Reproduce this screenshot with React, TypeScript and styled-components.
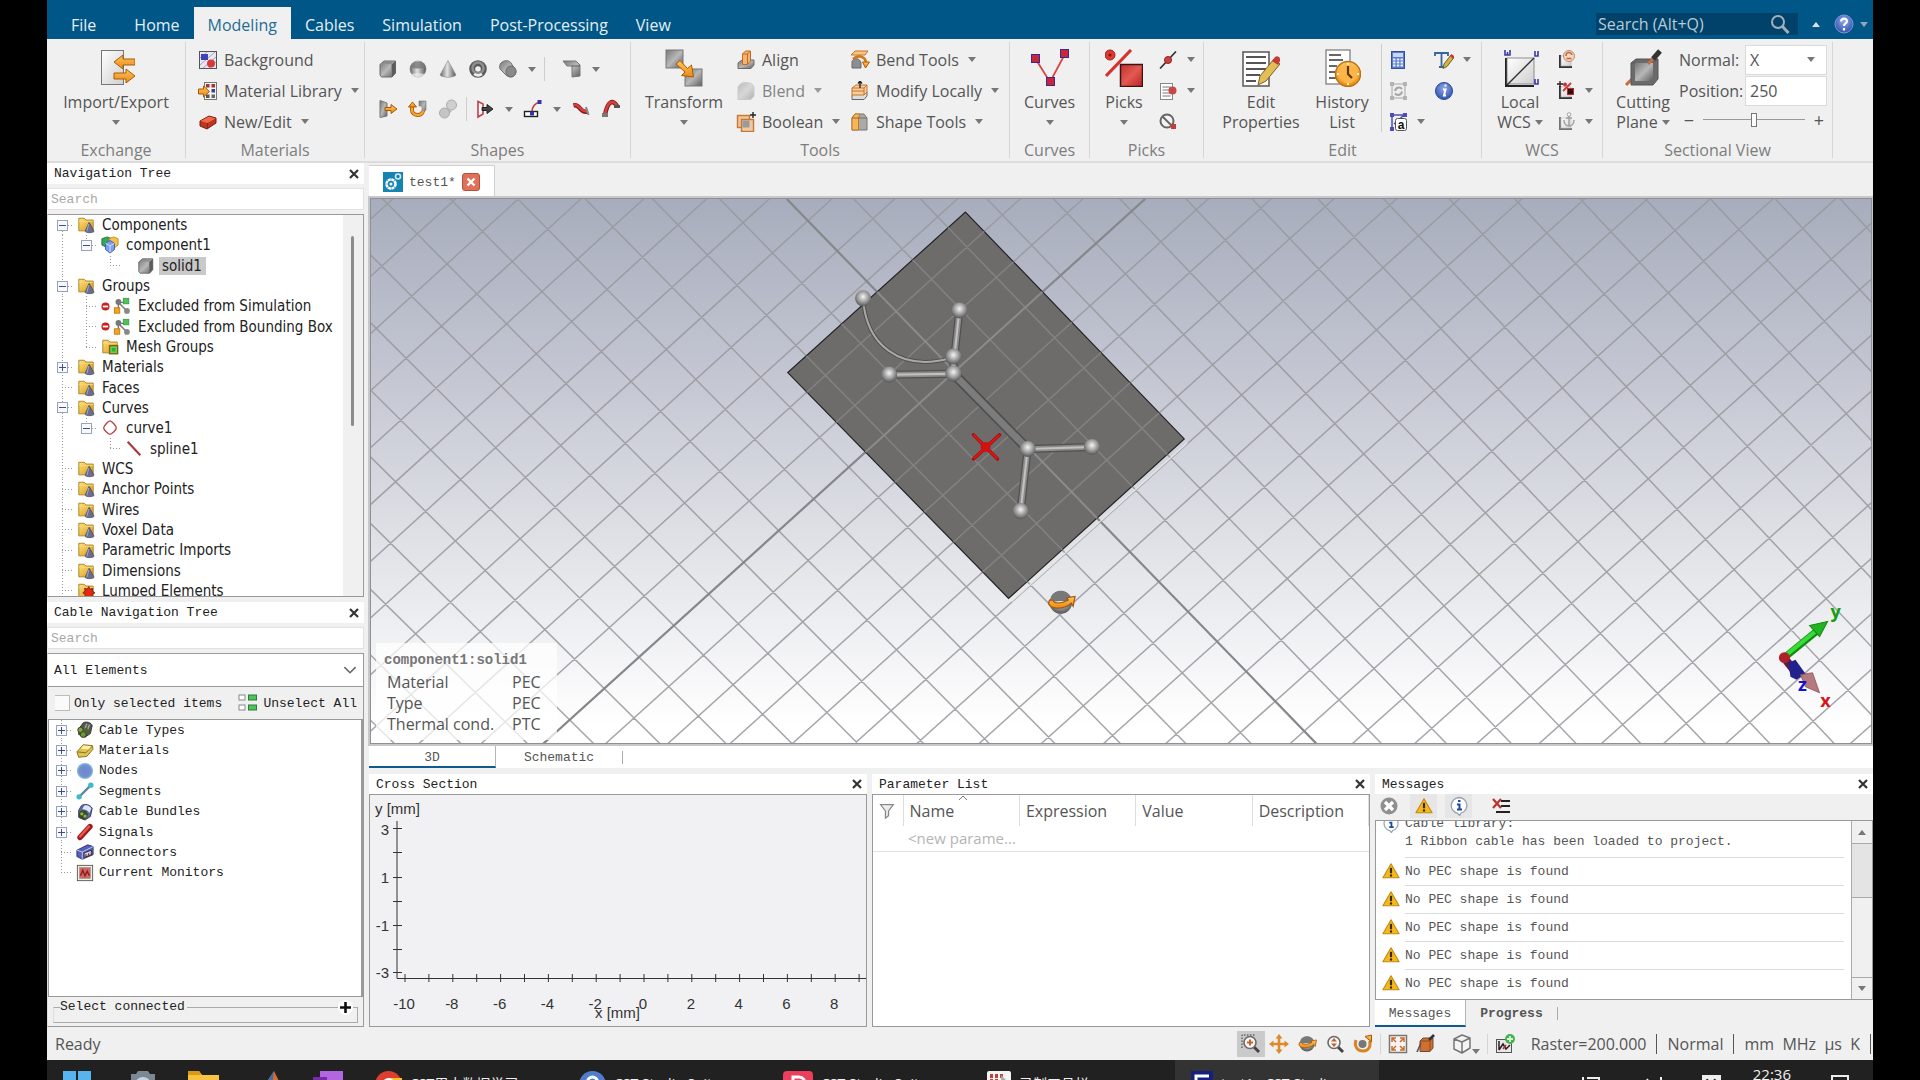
import React from 'react';
import styled, { createGlobalStyle, css } from 'styled-components';

const UI = `"Open Sans", "Noto Sans", "Noto Sans CJK SC", sans-serif`;
const MONO = `"Liberation Mono", "Noto Sans CJK SC", monospace`;
const TREE = `"DejaVu Sans Condensed", "Noto Sans", sans-serif`;

const GlobalStyle = createGlobalStyle`
  * { box-sizing: border-box; }
  body { margin: 0; background: #000; overflow: hidden; }
  button, input, select { font: inherit; color: inherit; margin: 0; }
  button { background: none; border: 0; padding: 0; cursor: pointer; }
  svg { display: block; flex: none; }
`;

/* ---------- icons ---------- */

const HiddenSvg = styled.svg`position: absolute;`;
const Gradients = () => (
  <HiddenSvg width="0" height="0" aria-hidden="true">
    <defs>
      <linearGradient id="steel" x1="0" y1="0" x2="1" y2="1">
        <stop offset="0" stopColor="#777" /><stop offset="0.5" stopColor="#b8b8b8" /><stop offset="1" stopColor="#5e5e5e" />
      </linearGradient>
      <linearGradient id="steelH" x1="0" y1="0" x2="1" y2="0">
        <stop offset="0" stopColor="#666" /><stop offset="0.45" stopColor="#e2e2e2" /><stop offset="1" stopColor="#555" />
      </linearGradient>
      <linearGradient id="pale" x1="0" y1="0" x2="1" y2="1">
        <stop offset="0" stopColor="#fff" /><stop offset="1" stopColor="#cfcfcf" />
      </linearGradient>
      <linearGradient id="amber" x1="0" y1="0" x2="0" y2="1">
        <stop offset="0" stopColor="#ffc35c" /><stop offset="1" stopColor="#ec8a12" />
      </linearGradient>
      <linearGradient id="gold" x1="0" y1="0" x2="1" y2="1">
        <stop offset="0" stopColor="#ffe07a" /><stop offset="1" stopColor="#d69a1e" />
      </linearGradient>
      <linearGradient id="ruby" x1="0" y1="0" x2="1" y2="1">
        <stop offset="0" stopColor="#c52f2f" /><stop offset="0.5" stopColor="#e25a50" /><stop offset="1" stopColor="#b82424" />
      </linearGradient>
      <radialGradient id="ball" cx="0.5" cy="0.4" r="0.6">
        <stop offset="0" stopColor="#f4f4f4" /><stop offset="0.5" stopColor="#a5a5a5" /><stop offset="1" stopColor="#555" />
      </radialGradient>
      <radialGradient id="blueBall" cx="0.5" cy="0.35" r="0.65">
        <stop offset="0" stopColor="#8fa9ea" /><stop offset="1" stopColor="#3152ac" />
      </radialGradient>
      <radialGradient id="softBall" cx="0.5" cy="0.5" r="0.5">
        <stop offset="0" stopColor="#7484d0" /><stop offset="0.7" stopColor="#6f8fd0" /><stop offset="1" stopColor="#8cc0dc" />
      </radialGradient>
    </defs>
  </HiddenSvg>
);

const orangeArrow = (d: string) => <path d={d} fill="url(#amber)" stroke="#a85a08" strokeWidth="1" strokeLinejoin="round" />;

const folder = (
  <>
    <path d="M2 2.500h6l2 2h8v12H2z" fill="url(#gold)" stroke="#a8801c" />
    <path d="M2 6h16" stroke="#f5d77c" />
  </>
);

const orbit = (
  <>
    <circle cx="10" cy="10" r="7.500" fill="url(#ball)" />
    <path d="M3.500 6a7.500 7.500 0 0 1 13 0l-1 3H5z" fill="#787878" />
    <path d="M2.500 8.500C-.5 14 10 16 17 10.500l1.200 2L19.500 6l-5.500.8 1 1.500C10 11 5 11 5 8.500z" fill="url(#amber)" stroke="#a05a10" strokeWidth="0.8" />
  </>
);

const axes = (
  <>
    <path d="M4 5v12h12" fill="none" stroke="#333" strokeWidth="2" />
    <rect x="5" y="6" width="10" height="10" fill="url(#pale)" stroke="#aaa" strokeWidth="0.6" />
  </>
);

const lens = (
  <>
    <path d="m12.500 12.500 5.500 5.500" stroke="#444" strokeWidth="3" />
    <circle cx="9" cy="8.500" r="6" fill="#f6f6f6" stroke="#6a6a6a" strokeWidth="1.600" />
  </>
);

const glyphs: Record<string, React.ReactNode> = {
  background: (
    <>
      <rect x="1.500" y="1.500" width="17" height="17" fill="#e8e8f2" stroke="#555" />
      <path d="m2 8 7-6M2 15 17 2M5 18 18 7M11 18l7-6" stroke="#a3a3bd" />
      <rect x="3" y="4" width="7" height="6" fill="#4040bb" />
      <circle cx="13" cy="13.500" r="4" fill="#d83a3a" />
    </>
  ),
  library: (
    <>
      <rect x="6.500" y="1.500" width="12" height="17" fill="#f5f5f5" stroke="#777" />
      <rect x="8" y="3" width="3.500" height="3.500" fill="#a33" /><rect x="13.500" y="3" width="3.500" height="3.500" fill="#a33" />
      <rect x="13.500" y="8" width="3.500" height="3.500" fill="#3a3aa0" /><rect x="8" y="13.500" width="3.500" height="3.500" fill="#555" /><rect x="13.500" y="13.500" width="3.500" height="3.500" fill="#666" />
      {orangeArrow('M0.500 8h5V5l6 5.500-6 5.500v-3h-5z')}
    </>
  ),
  brick: (
    <>
      <path d="m2 9 9-5 7 2v5l-9 6-7-3z" fill="#c03520" stroke="#7c1c10" />
      <path d="m2.500 9 8.500-4.500 6.500 2L9.500 11z" fill="#ef6a4c" />
      <path d="M9.500 11v5.500" stroke="#8c2414" />
    </>
  ),
  cube: (
    <>
      <path d="M2 5.500 6 2h11.500v12L14 18H3.500L2 16z" fill="url(#steel)" stroke="#6a6a6a" />
      <path d="M13.500 5.500 17.500 2v12L14 18z" fill="#5c5c5c" />
      <path d="M3 5 6.500 2.500H16L13 5z" fill="#8d8d8d" />
    </>
  ),
  sphere: (
    <>
      <circle cx="10" cy="10" r="8" fill="url(#steelH)" stroke="#777" strokeWidth="0.6" />
      <path d="M2.500 8a8 8 0 0 1 15 0c-4 2-11 2-15 0z" fill="#777" opacity="0.8" />
      <path d="M3.500 15a8 8 0 0 0 13 0c-4-1-9-1-13 0z" fill="#ececec" opacity="0.7" />
    </>
  ),
  cone: (
    <path d="M10 1.500 18 16c-2 3-14 3-16 0z" fill="url(#steelH)" stroke="#888" strokeWidth="0.6" />
  ),
  torus: (
    <>
      <circle cx="10" cy="10" r="5.800" fill="none" stroke="#5a5a5a" strokeWidth="6" />
      <circle cx="10" cy="9" r="5.500" fill="none" stroke="#8f8f8f" strokeWidth="2.500" />
      <path d="M6 15a7 7 0 0 0 8 0" stroke="#eee" strokeWidth="2.500" fill="none" />
    </>
  ),
  cylinder: (
    <>
      <path d="M3 4c4-4 9-2 10 0l5 8c0 5-6 8-10 4L2 10c-1-2 0-5 1-6z" fill="url(#steel)" stroke="#707070" />
      <ellipse cx="13" cy="12.500" rx="5" ry="5.500" fill="#8a8a8a" stroke="#6a6a6a" />
    </>
  ),
  sheet: (
    <>
      <path d="M1 2h13l4 4v11l-8 1V7H5z" fill="url(#steel)" stroke="#777" />
      <path d="M10 7h8" stroke="#606060" />
    </>
  ),
  extrude: (
    <>
      <path d="M2 1.500 9 4v13l-7 1.500z" fill="url(#steel)" stroke="#777" />
      {orangeArrow('M7 8.500h6v-3l6 4.500-6 4.500v-3H7z')}
    </>
  ),
  revolve: (
    <>
      <path d="M11 2h7v9l-4 4V7h-3z" fill="url(#steel)" stroke="#777" strokeWidth="0.6" />
      <path d="M4 8v3c0 6 10 7 11 1" fill="none" stroke="#a85a08" strokeWidth="4" />
      <path d="M4 8v3c0 6 10 7 11 1" fill="none" stroke="#f5a232" strokeWidth="2.500" />
      {orangeArrow('M0.500 8 4.500 3l4 5z')}
    </>
  ),
  loft: (
    <>
      <circle cx="13.500" cy="6" r="5" fill="#cfcfcf" stroke="#aaa" />
      <path d="m8 10 4 4" stroke="#bbb" strokeWidth="5" />
      <circle cx="6.500" cy="14" r="5" fill="#c5c5c5" stroke="#aaa" />
    </>
  ),
  faceArrow: (
    <>
      <path d="M3 2.500 8 5v10l-5 3z" fill="#fff" stroke="#c43c48" strokeWidth="1.600" />
      <path d="M7 8.500h5v-3l6 4.500-6 4.500v-3H7z" fill="#444" stroke="#222" />
    </>
  ),
  curveNode: (
    <>
      <path d="M9 13c0-6 4-9 8-10" stroke="#c83a3a" strokeWidth="1.600" fill="none" />
      <rect x="1.500" y="12.500" width="13" height="5" fill="#fff" stroke="#222" strokeWidth="1.400" />
      <rect x="14.500" y="1" width="4" height="4" fill="#3434a8" /><rect x="7" y="12.500" width="4" height="4" fill="#3434a8" />
    </>
  ),
  wave: (
    <>
      <path d="M2.500 6.500c7-2 6 8 14 6" stroke="#851d1d" strokeWidth="4.500" fill="none" />
      <path d="M2.500 6c7-2 6 8 14 6" stroke="#d84040" strokeWidth="2.500" fill="none" />
      <path d="m15 8 2.500 8" stroke="#888" strokeWidth="2" />
    </>
  ),
  hook: (
    <>
      <path d="M4 17C6 2 12 0 16 7" stroke="#851d1d" strokeWidth="4.500" fill="none" />
      <path d="M4 16C6 2 12 0 16 7" stroke="#d84040" strokeWidth="2.500" fill="none" />
      <rect x="1" y="14" width="6" height="4" fill="#777" /><rect x="13" y="6" width="6" height="3" fill="#555" />
    </>
  ),
  align: (
    <>
      <path d="m2 13 4-3h12v5l-3 3.500H2z" fill="url(#steel)" stroke="#6a6a6a" />
      <path d="m6.500 4 3-3h5v10l-3 3.500h-5z" fill="#f2b475" stroke="#c56a20" />
      <path d="M6.500 4h5v10M11.500 4l3-3" fill="none" stroke="#c56a20" />
    </>
  ),
  blend: <path d="M2 6c3-5 7-5 11-4 5 1 5 4 5 6v7l-3 3.500H2z" fill="url(#steel)" stroke="#999" opacity="0.6" />,
  boolean: (
    <>
      <rect x="1.500" y="3.500" width="12" height="12" fill="#f0c49a" stroke="#c87830" strokeWidth="1.400" />
      <rect x="5.500" y="7.500" width="12" height="12" fill="#eec9a6" stroke="#c87830" strokeWidth="1.400" />
      <rect x="6.500" y="8.500" width="7" height="7" fill="#9a9a9a" />
      <path d="M17 0v6M14 3h6" stroke="#222" strokeWidth="1.400" />
    </>
  ),
  bend: (
    <>
      <path d="m1 5 4-4h13l-3 4z" fill="#f7c587" stroke="#c5772a" />
      <path d="M2 18v-6c0-4 8-5 9 1v5z" fill="#8b8f94" stroke="#666" />
      <path d="M3 9c6-5 12-2 13 3" fill="none" stroke="#d07a18" strokeWidth="2.600" />
      {orangeArrow('M12.500 12h7l-4 6z')}
    </>
  ),
  modify: (
    <>
      <path d="m2 14 3-3h12v4l-3 3.500H2z" fill="#ddd" stroke="#666" />
      <path d="m2 7 4-3h11v7l-3 3H2z" fill="#f7cf9c" stroke="#c5742a" />
      <path d="M2 7h12l3-3M14 7v7M2 10h12" fill="none" stroke="#c5742a" />
      <path d="M10 0v7M8 2.500 10 0l2 2.500" stroke="#222" fill="none" strokeWidth="1.300" />
    </>
  ),
  shape: (
    <>
      <path d="m2 6 3-4h9l3 4v12H2z" fill="#aaa" stroke="#777" />
      <path d="m2 6 3-4h5L8.500 6v12H2z" fill="#f8b659" stroke="#c07820" />
      <path d="M2 6h15" stroke="#8a6a40" />
    </>
  ),
  pickPoint: (
    <>
      <path d="M2 18.500 18 1.500" stroke="#333" strokeWidth="1.800" />
      <circle cx="10" cy="10" r="3.500" fill="#d04040" stroke="#8c2020" />
    </>
  ),
  pickList: (
    <>
      <rect x="2.500" y="2.500" width="12" height="16" fill="#fff" stroke="#888" />
      <path d="M4.500 6h8M4.500 9h8M4.500 12h8M4.500 15h8" stroke="#777" />
      <circle cx="14.500" cy="9.500" r="4" fill="#c84848" />
    </>
  ),
  pickClear: (
    <>
      <circle cx="9" cy="9" r="6.500" fill="#f4f4f4" stroke="#666" strokeWidth="2" />
      <path d="m4.500 4.500 9 9" stroke="#666" strokeWidth="2" />
      <path d="M13 12h5v5h-5z" fill="#c93c3c" />
    </>
  ),
  calculator: (
    <>
      <rect x="3.500" y="1.500" width="13" height="17" fill="#5d7bcb" stroke="#33509c" />
      <rect x="5" y="3" width="10" height="4" fill="#c9d6f5" />
      <path d="M5 9.500h2.500M8.800 9.500h2.500M12.500 9.500H15M5 12.500h2.500M8.800 12.500h2.500M12.500 12.500H15M5 15.500h2.500M8.800 15.500h2.500M12.500 15.500H15" stroke="#e8eefc" strokeWidth="2" />
    </>
  ),
  refreshBox: (
    <g opacity="0.7">
      <path d="M4 3h13v14H4z" fill="#eee" stroke="#888" />
      <path d="M2 1h4v4H2zM15 1h4v4h-4zM2 15h4v4H2zM15 15h4v4h-4z" fill="#999" />
      <path d="M7 10a4 4 0 0 1 7-2M14 10.500a4 4 0 0 1-7 2" stroke="#888" strokeWidth="2" fill="none" />
    </g>
  ),
  labelBox: (
    <>
      <path d="M4 3h12M4 3v14M6 12 16 3" stroke="#4c4cc0" strokeWidth="1.500" fill="none" />
      <path d="M2 1h4v4H2zM15 1h4v4h-4zM2 15h4v4H2z" fill="#4c4cc0" />
      <rect x="7.500" y="6.500" width="11" height="12" rx="2" fill="#fff" stroke="#555" />
      <text x="13" y="16.500" fontSize="12" fontWeight="bold" fontFamily="Liberation Sans, sans-serif" textAnchor="middle" fill="#111">a</text>
    </>
  ),
  textEdit: (
    <>
      <path d="M1 3h13M7.500 3v14M5 17h5M1 2v4M14 2v4" stroke="#35659f" strokeWidth="1.800" />
      <path d="m10 14 7-9 3 2.500-7 9-4 2z" fill="#dcae46" stroke="#5c6a28" />
      <path d="m16 6 1.500-2 3 2.500L19 9z" fill="#c83a30" />
    </>
  ),
  info: (
    <>
      <circle cx="10" cy="10" r="8.500" fill="url(#blueBall)" stroke="#27489c" />
      <path d="M10.500 4.500h2M9 8.500h2.500l-1.500 6h2" stroke="#fff" strokeWidth="2" fill="none" />
    </>
  ),
  wcsRotate: (
    <>
      {axes}
      <circle cx="13" cy="6" r="5.500" fill="#f4d7c4" stroke="#c08a6a" />
      <path d="M10 6a3 3 0 0 1 6-1M10.500 8.500h5" stroke="#c0683a" strokeWidth="1.500" fill="none" />
    </>
  ),
  wcsPick: (
    <>
      {axes}
      <path d="M1 3h6M4 0v6" stroke="#222" strokeWidth="1.300" />
      <path d="m7 10 8-8" stroke="#d03a3a" strokeWidth="2" /><circle cx="9" cy="3.500" r="2" fill="#c33" />
      <rect x="11.500" y="7.500" width="6" height="6" fill="#3a0c0c" stroke="#a33" />
    </>
  ),
  wcsAnchor: (
    <g opacity="0.65">
      {axes}
      <circle cx="13" cy="2.500" r="1.800" fill="#fff" stroke="#777" />
      <path d="M13 4v10M8 8c0 8 10 8 10 0M10 6h6" stroke="#777" strokeWidth="1.500" fill="none" />
    </g>
  ),
  folder: (
    <>
      {folder}
      <path d="m13.500 7 5.500 10c-1 2-9 2-10 0z" fill="#6b6f8e" stroke="#3f4463" strokeWidth="0.8" />
      <path d="m13 9-2 8" stroke="#aab0cc" />
    </>
  ),
  folderMesh: (
    <>
      {folder}
      <rect x="9.500" y="8.500" width="9" height="9" fill="#58d858" stroke="#8c5a12" strokeWidth="1.500" />
      <rect x="12" y="11" width="4" height="4" fill="#2fae2f" />
    </>
  ),
  folderLumped: (
    <>
      {folder}
      <path d="m13 5 1.500 3 3-1-.5 3 3 2-3 1.500v3H9V13.500L6.500 12 9 10l-.5-3 3 1z" fill="#e02a12" stroke="#8c1608" />
    </>
  ),
  component: (
    <>
      <path d="m1 3 6-2 5 2v7l-5 3-6-3z" fill="#35a852" stroke="#1d7034" />
      <path d="m9 3 5-2 5 2v7l-5 4-5-3z" fill="#f6c04c" stroke="#c08a1c" />
      <path d="m5 8 5-3 5 3v7l-5 4-5-4z" fill="#7e9df0" stroke="#3a5ab8" />
      <path d="m5 8 5 3 5-3M10 11v7" stroke="#dde6ff" fill="none" />
    </>
  ),
  excluded: (
    <>
      <path d="M6 6h9M6 6l9 9M6 6v9" stroke="#777" strokeWidth="1.600" />
      <circle cx="6" cy="5.500" r="3.200" fill="#777" />
      <rect x="11.500" y="1.500" width="6" height="6" fill="#4fc25a" stroke="#3aa048" />
      <rect x="1.500" y="12" width="6" height="6" fill="#f2a324" stroke="#c47c10" />
      <circle cx="15.500" cy="15.500" r="3.200" fill="#888" />
    </>
  ),
  forbid: (
    <>
      <circle cx="10" cy="10" r="9" fill="#c8201c" />
      <path d="M4 10h12" stroke="#fff" strokeWidth="4" />
    </>
  ),
  curve: <path d="M10 2c2 0 7 6 7 8s-5 7-7 7-7-5-7-7 5-8 7-8z" fill="#fff" stroke="#b84444" strokeWidth="1.500" />,
  spline: <path d="m3 2 14 15" stroke="#a83a3e" strokeWidth="2.400" />,
  cable: (
    <>
      <path d="M8 2c4-2 9 0 10 3l-2 9-6 4-7-3V9z" fill="#56584e" stroke="#333" />
      <path d="m12 3-3 8M15 4l-3 8" stroke="#a9aba0" strokeWidth="1.500" />
      <circle cx="5" cy="10" r="3" fill="#86a83a" stroke="#333" /><circle cx="8" cy="15" r="3.300" fill="#6f9830" stroke="#333" /><circle cx="11" cy="10.500" r="2.600" fill="#466a28" />
    </>
  ),
  goldBar: (
    <>
      <path d="m1 11 7-8 10 1 1 4-7 8-9 1z" fill="#e0c350" stroke="#80691c" />
      <path d="m1.500 11 9.500 1 7.500-8" fill="none" stroke="#80691c" /><path d="m8 4 9 .8-3 3.500L5.500 7.500z" fill="#fff1a8" />
    </>
  ),
  node: <circle cx="10" cy="10" r="9" fill="url(#softBall)" />,
  segment: (
    <>
      <path d="M4 16 16 4" stroke="#5a8a9c" strokeWidth="2.500" />
      <circle cx="16.500" cy="3.500" r="3" fill="#3fb8cc" /><circle cx="3.500" cy="16.500" r="3" fill="#3fb8cc" />
    </>
  ),
  bundle: (
    <>
      <path d="M6 3c4-3 10-1 12 3l-2 9-6 4-7-3V8z" fill="#5a6aa8" stroke="#2c355f" />
      <path d="M9 3c3-1 6 0 8 3l-2 5c-2-3-5-4-8-4z" fill="#dfe6fa" />
      <circle cx="8" cy="13" r="5" fill="#3c4a28" /><circle cx="6.500" cy="12" r="1.800" fill="#94b83c" /><circle cx="10" cy="14.500" r="1.800" fill="#94b83c" />
    </>
  ),
  signal: (
    <>
      <path d="M4.500 16 15.500 4" stroke="#a01818" strokeWidth="6" strokeLinecap="round" />
      <path d="m4.500 15 10-11" stroke="#ee5a50" strokeWidth="2.500" strokeLinecap="round" />
    </>
  ),
  connector: (
    <>
      <path d="m1 8 12-6 6 2v9l-12 5-6-3z" fill="#5560b8" stroke="#2a3270" />
      <path d="m1 8 6 2 12-6M7 10v8" fill="none" stroke="#c9d0f5" />
      <path d="m9 11 8-3v5l-8 3z" fill="#cfd4ea" stroke="#222" /><path d="M11 12.500v2M14 11.500v2" stroke="#a22" strokeWidth="1.500" />
    </>
  ),
  monitor: (
    <>
      <rect x="1.500" y="1.500" width="17" height="17" fill="#ececec" stroke="#555" />
      <rect x="4" y="4" width="12" height="12" fill="#c96a6a" stroke="#884" strokeWidth="0.5" />
      <path d="m5 13 2.500-6L10 13l2.500-5 2.500 5" stroke="#a01414" strokeWidth="1.600" fill="none" />
    </>
  ),
  unselect: (
    <>
      <rect x="1" y="2" width="6" height="5" fill="#fff" stroke="#888" /><rect x="1" y="12" width="6" height="5" fill="#fff" stroke="#888" />
      <rect x="10.500" y="2" width="8" height="5" fill="#4fc25a" stroke="#2c7a38" /><rect x="10.500" y="12" width="8" height="5" fill="#4fc25a" stroke="#2c7a38" />
    </>
  ),
  warning: (
    <>
      <path d="M10 2 19 17.500H1z" fill="#f5b81e" stroke="#c08a10" strokeWidth="1.200" strokeLinejoin="round" />
      <path d="M10 6.500v6" stroke="#3a2c00" strokeWidth="2.400" /><circle cx="10" cy="15" r="1.300" fill="#3a2c00" />
    </>
  ),
  bubble: (
    <>
      <path d="M10 1.500a8 8 0 0 1 2 15.700l-1.500 2.300-2-2.200A8 8 0 0 1 10 1.500z" fill="#fff" stroke="#98a0b0" strokeWidth="1.300" />
      <path d="M9 5h2.500M8 8.500h2.500v5M8 13.500h5" stroke="#1c4aa0" strokeWidth="2" fill="none" />
    </>
  ),
  errorOff: (
    <>
      <circle cx="10" cy="10" r="8.500" fill="#8f8f8f" />
      <path d="m6 6 8 8M14 6l-8 8" stroke="#fff" strokeWidth="3.200" />
    </>
  ),
  clearList: (
    <>
      <path d="M9 5h9M9 10h9M4 16h14" stroke="#222" strokeWidth="2.200" />
      <path d="m1 3 8 9M9 3l-8 9" stroke="#b8342c" strokeWidth="2.200" />
    </>
  ),
  filter: <path d="M2 2h16l-6 8v6l-4 3v-9z" fill="url(#pale)" stroke="#888" strokeWidth="1.500" />,
  project: (
    <>
      <rect width="20" height="20" fill="#1584ae" />
      <circle cx="8" cy="12" r="4.500" fill="none" stroke="#fff" strokeWidth="2.500" strokeDasharray="3 0.500" />
      <circle cx="8" cy="12" r="1.500" fill="#fff" />
      <circle cx="15" cy="4.500" r="2.500" fill="none" stroke="#cdeaf5" strokeWidth="1.600" />
    </>
  ),
  help: (
    <>
      <circle cx="10" cy="10" r="9" fill="url(#blueBall)" stroke="#7a96d8" />
      <path d="M7 7.500c0-4 6.500-3.500 6 0-.3 2-3 2-3 4.500M10 14v2.500" stroke="#fff" strokeWidth="2.200" fill="none" />
    </>
  ),
  search: (
    <>
      <circle cx="8" cy="8" r="6" fill="none" stroke="#9fb0bb" strokeWidth="2" />
      <path d="m12.500 12.500 6 6.500" stroke="#9fb0bb" strokeWidth="3" />
    </>
  ),
  zoomBox: (
    <>
      <path d="M1 14V1h13" fill="none" stroke="#333" strokeDasharray="1.500 1.500" />
      {lens}
      <path d="M6 8.500h6M9 5.500v6" stroke="#c8622a" strokeWidth="2" />
    </>
  ),
  pan: (
    <>
      <path d="M10 3v14M3 10h14" stroke="#dc8a2c" strokeWidth="2.600" />
      <path d="m10 0 3.500 4.500h-7zM10 20l3.500-4.500h-7zM0 10l4.500-3.500v7zM20 10l-4.500-3.500v7z" fill="#dc8a2c" />
    </>
  ),
  orbit,
  zoom: (
    <>
      {lens}
      <path d="m9 4 3 3.500H6zM9 13l3-3.500H6z" fill="#c8622a" />
    </>
  ),
  rotate: (
    <>
      <circle cx="9.500" cy="10" r="4" fill="#777" />
      <path d="M3 6c-2 6 1 11 7 11s8-5 6.500-10" fill="none" stroke="#d98422" strokeWidth="3" />
      {orangeArrow('M12 2.500 18.500 1v7z')}
    </>
  ),
  fit: (
    <>
      <rect x="1.500" y="1.500" width="17" height="17" fill="#f4f4f4" stroke="#777" strokeWidth="1.500" />
      <path d="M4 8V4h4M12 4h4v4M16 12v4h-4M8 16H4v-4M4 4l4 4M16 4l-4 4M16 16l-4-4M4 16l4-4" stroke="#d06a2a" strokeWidth="1.500" fill="none" />
    </>
  ),
  cutBox: (
    <>
      <path d="m4 7 3-3h10v10l-3 3.500H4z" fill="#cf7030" stroke="#6a4a38" />
      <path d="M4 7h10V17" fill="none" stroke="#8a4a20" />
      <path d="m13 6 5-5" stroke="#333" strokeWidth="2.600" /><path d="m5 9-4 9" stroke="#555" strokeWidth="1.600" />
    </>
  ),
  wireCube: (
    <path d="m2 5 8-4 8 3v10l-8 5-8-4zM2 5l8 3 8-4M10 8v11" fill="#f5f5f5" stroke="#777" strokeWidth="1.500" strokeLinejoin="round" />
  ),
  addPlot: (
    <>
      <rect x="1.500" y="5.500" width="15" height="13" fill="#e8e8e8" stroke="#555" />
      <path d="M4 7v9M4 16l4-6 3 5 4-4" stroke="#222" strokeWidth="1.500" fill="none" /><path d="m8 15 3-4" stroke="#b33" strokeWidth="1.500" />
      <circle cx="15" cy="5" r="5" fill="#45b250" /><path d="M15 2v6M12 5h6" stroke="#d7f4da" strokeWidth="1.800" />
    </>
  ),
};

const bigGlyphs: Record<string, React.ReactNode> = {
  exchange: (
    <>
      <rect x="4.500" y="1.500" width="22" height="34" fill="url(#pale)" stroke="#777" />
      {orangeArrow('M38 10H26V6l-9 7 9 7v-4h12z')}
      {orangeArrow('M17 24h12v-4l9 7-9 7v-4H17z')}
    </>
  ),
  transform: (
    <>
      <rect x="1" y="1" width="17" height="18" fill="url(#steel)" stroke="#777" />
      <rect x="20" y="20" width="17" height="17" fill="url(#steel)" stroke="#777" />
      {orangeArrow('m11 15 4-3.500 7.500 8 4-3.500 2 12-12-1.500 3.500-3.500z')}
    </>
  ),
  curves: (
    <>
      <path d="m4 9 15 24L34 5" stroke="#dc4444" strokeWidth="1.800" fill="none" />
      <rect x="0.500" y="5.500" width="8" height="8" fill="#c8263c" stroke="#3a2a90" /><rect x="29.500" y="0.500" width="8" height="8" fill="#c8263c" stroke="#3a2a90" /><rect x="15.500" y="28.500" width="8" height="8" fill="#c8263c" stroke="#3a2a90" />
    </>
  ),
  picks: (
    <>
      <circle cx="5" cy="6" r="5" fill="#e03a30" stroke="#a02018" /><circle cx="5" cy="6" r="1.500" fill="#7c1610" />
      <path d="M1 27 26 1" stroke="#d23430" strokeWidth="3.200" />
      <rect x="15.500" y="15.500" width="22" height="22" fill="url(#ruby)" stroke="#3a1414" strokeWidth="1.500" />
    </>
  ),
  properties: (
    <>
      <rect x="1" y="3" width="26" height="34" fill="#fff" stroke="#555" strokeWidth="1.500" />
      <path d="M4 8h20M4 14h20M4 20h20M4 26h14M4 32h10" stroke="#555" strokeWidth="1.800" />
      <path d="m16 36 2-9 14-17 6 5-14 17z" fill="#e3bd58" stroke="#7a6124" /><path d="m30 12 3-4c3-2 6 1 5 4l-2 4z" fill="#c43c34" />
    </>
  ),
  history: (
    <>
      <rect x="3" y="1" width="24" height="34" fill="#fff" stroke="#777" strokeWidth="1.200" />
      <path d="M6 6h12M6 11h14M6 17h8M6 23h6M6 29h7" stroke="#666" strokeWidth="1.800" />
      <circle cx="25" cy="25" r="12.500" fill="url(#amber)" stroke="#b87414" strokeWidth="1.500" />
      <circle cx="25" cy="25" r="9.500" fill="#ffb446" />
      <path d="M25 17v8l4 4" stroke="#5a3a10" strokeWidth="2.200" fill="none" /><path d="M25 14v2M25 34v2M14 25h2M34 25h2" stroke="#fff0d0" strokeWidth="2" />
    </>
  ),
  wcs: (
    <>
      <path d="M5 9v28h28" fill="none" stroke="#222" strokeWidth="2" />
      <rect x="6" y="9" width="27" height="26" fill="url(#pale)" stroke="#777" strokeWidth="0.8" />
      <path d="M6 36 33 9" stroke="#333" strokeWidth="1.500" />
      <path d="M4 1v5h5V1M6.500 3v3M34 2v5h3V2M34 30v5h3v-5" stroke="#3a3aa0" strokeWidth="1.600" fill="none" />
    </>
  ),
  cutting: (
    <>
      <path d="M2 36 10 28" stroke="#cc6a3c" strokeWidth="3" />
      <path d="m7 14 5-4h22v20l-5 6H7z" fill="#6a6a6a" stroke="#555" />
      <rect x="11" y="14" width="18" height="18" fill="url(#steel)" />
      <path d="M29 14l5-4M7 14l4 0" fill="none" stroke="#5a5a5a" />
      <path d="m24 15 5-5" stroke="#cc6a3c" strokeWidth="3" />
      <path d="m29 10 7-8" stroke="#333" strokeWidth="5" />
    </>
  ),
};

const Icon = ({ name, size = 20 }: { name: string; size?: number }) => (
  <svg width={size} height={size} viewBox="0 0 20 20" aria-hidden="true">{glyphs[name]}</svg>
);
const BigIcon = ({ name }: { name: string }) => (
  <svg width="38" height="38" viewBox="0 0 38 38" aria-hidden="true">{bigGlyphs[name]}</svg>
);

const Caret = styled.span<{ $up?: boolean; $light?: boolean }>`
  flex: none;
  width: 0;
  height: 0;
  border: 4px solid transparent;
  ${p => (p.$up ? css`border-top-width: 0; border-bottom: 5px solid;` : css`border-bottom-width: 0; border-top: 5px solid;`)}
  color: ${p => (p.$light ? '#8fa8b8' : '#777')};
`;

/* ---------- shell ---------- */

const Shell = styled.div`
  display: flex;
  flex-direction: column;
  height: 100vh;
  overflow: hidden;
  margin: 0 47px;
  background: #f0f0f0;
  font-family: ${UI};
  font-size: 16px;
  color: #555;
`;

const TitleBar = styled.header`
  display: flex;
  justify-content: space-between;
  padding-top: 7px;
  background: #005686;
`;
const TabList = styled.nav`display: flex;`;
const RibbonTab = styled.button<{ $active?: boolean; $file?: boolean }>`
  height: 32px;
  padding: 4px ${p => (p.$file ? 24 : 14)}px 0;
  line-height: 28px;
  color: ${p => (p.$active ? '#1f6d95' : '#e4eef4')};
  background: ${p => (p.$active ? '#f0f0f0' : 'transparent')};
`;
const TitleTools = styled.div`
  display: flex;
  align-items: center;
  gap: 10px;
  padding: 2px 5px 0 0;
`;
const QuickSearch = styled.label`
  display: flex;
  align-items: center;
  width: 202px;
  height: 22px;
  padding: 0 8px 0 2px;
  background: #00426a;
  input {
    flex: 1;
    min-width: 0;
    padding: 0;
    border: 0;
    outline: 0;
    background: none;
    line-height: 22px;
    &::placeholder { color: #b9cbd6; opacity: 1; }
  }
`;
const HelpButton = styled.button`display: flex; align-items: center; gap: 6px;`;
const CollapseButton = styled.button`
  display: flex;
  padding: 4px;
  span { color: #d9e4ea; }
`;

/* ---------- ribbon ---------- */

const Ribbon = styled.section`
  display: flex;
  padding: 3px 0;
  border-bottom: 2px solid #dcdcdc;
`;
const GroupBox = styled.div<{ $w: number }>`
  flex: 0 0 ${p => p.$w}px;
  display: flex;
  flex-direction: column;
  padding-top: 2px;
  border-right: 1px solid #d6d6d6;
`;
const GroupBody = styled.div<{ $inset?: number; $center?: boolean }>`
  display: flex;
  height: 93px;
  padding-left: ${p => p.$inset ?? 0}px;
  justify-content: ${p => (p.$center ? 'center' : 'flex-start')};
`;
const GroupTitle = styled.div`
  margin-top: 5px;
  line-height: 16px;
  text-align: center;
  color: #7d7d7d;
`;
const Group = (p: { title: string; w: number; inset?: number; center?: boolean; children: React.ReactNode }) => (
  <GroupBox $w={p.w}>
    <GroupBody $inset={p.inset} $center={p.center}>{p.children}</GroupBody>
    <GroupTitle>{p.title}</GroupTitle>
  </GroupBox>
);

const BigButton = styled.button<{ $w?: number }>`
  flex: none;
  width: ${p => (p.$w ? `${p.$w}px` : 'auto')};
  display: flex;
  flex-direction: column;
  align-items: center;
  padding-top: 5px;
  line-height: 20px;
  svg { margin-bottom: 5px; }
`;
const BigSecond = styled.span`
  display: flex;
  align-items: center;
  justify-content: center;
  gap: 4px;
  height: 20px;
`;
const Big = (p: { icon: string; label: string; second?: string; arrow?: boolean; w?: number }) => (
  <BigButton $w={p.w}>
    <BigIcon name={p.icon} />
    <span>{p.label}</span>
    <BigSecond>{p.second}{p.arrow && <Caret />}</BigSecond>
  </BigButton>
);

const Column = styled.div<{ $w?: number; $ml?: number }>`
  flex: none;
  width: ${p => (p.$w ? `${p.$w}px` : 'auto')};
  margin-left: ${p => p.$ml ?? 0}px;
  display: grid;
  grid-template-rows: repeat(3, 31px);
  align-items: center;
  justify-items: start;
`;
const ToolButton = styled.button<{ $off?: boolean }>`
  display: flex;
  align-items: center;
  gap: 6px;
  white-space: nowrap;
  opacity: ${p => (p.$off ? 0.7 : 1)};
  ${Caret} { margin-left: 3px; }
`;
const Tool = (p: { icon: string; label?: string; name?: string; arrow?: boolean; off?: boolean }) => (
  <ToolButton $off={p.off} aria-label={p.name}>
    <Icon name={p.icon} />
    {p.label}
    {p.arrow && <Caret />}
  </ToolButton>
);

const ShapeRows = styled.div`
  display: grid;
  grid-template-rows: 40px 40px;
  padding-top: 5px;
`;
const ShapeRow = styled.div`display: flex; align-items: center;`;
const ShapeButton = styled.button<{ $arrow?: boolean }>`
  display: flex;
  align-items: center;
  justify-content: center;
  width: ${p => (p.$arrow ? 18 : 30)}px;
  height: 30px;
`;
const Rule = styled.i<{ $after?: number; $h?: number }>`
  flex: none;
  width: 1px;
  height: ${p => p.$h ?? 24}px;
  margin: 0 ${p => p.$after ?? 3}px 0 3px;
  background: #cdcdcd;
`;
const Shape = ({ name }: { name: string }) => <ShapeButton aria-label={name}><Icon name={name} /></ShapeButton>;
const More = () => <ShapeButton $arrow aria-label="More"><Caret /></ShapeButton>;

const SectionForm = styled.div`
  display: grid;
  grid-template-columns: 66px 82px;
  grid-template-rows: repeat(3, 31px);
  align-items: center;
`;
const SelectWrap = styled.span`
  display: grid;
  grid-template-columns: 1fr 20px;
  align-items: center;
  select { grid-area: 1 / 1 / 2 / 3; appearance: none; }
  ${Caret} { grid-area: 1 / 2; pointer-events: none; }
`;
const fieldBox = css`
  width: 100%;
  height: 30px;
  padding: 0 4px;
  border: 1px solid #dadada;
  border-radius: 0;
  background: #fff;
  outline: 0;
`;
const FormSelect = styled.select`${fieldBox}`;
const FormInput = styled.input`${fieldBox}`;
const SliderRow = styled.div`
  grid-column: 1 / 3;
  display: flex;
  align-items: center;
  gap: 8px;
  padding: 0 2px 4px 4px;
  button { width: 12px; line-height: 20px; font-size: 18px; }
`;
const Slider = styled.input`
  appearance: none;
  flex: 1;
  min-width: 0;
  height: 16px;
  background: linear-gradient(#999, #999) center / 100% 1px no-repeat;
  &::-webkit-slider-thumb {
    appearance: none;
    width: 6px;
    height: 14px;
    border: 1px solid #777;
    background: #fff;
  }
`;

/* ---------- docks ---------- */

const Workspace = styled.main`
  flex: 1;
  min-height: 0;
  display: grid;
  grid-template-columns: 317px minmax(0, 1fr);
  gap: 5px;
`;
const LeftDock = styled.aside`
  display: flex;
  flex-direction: column;
  min-height: 0;
`;
const DockTitle = styled.div<{ $h?: number }>`
  flex: none;
  display: flex;
  align-items: center;
  justify-content: space-between;
  height: ${p => p.$h ?? 21}px;
  padding: 0 4px 0 7px;
  background: #fff;
  font: 13px ${MONO};
  color: #222;
`;
const CloseX = () => (
  <button aria-label="Close">
    <svg width="12" height="12" viewBox="0 0 12 12"><path d="m2 2 8 8M10 2l-8 8" stroke="#333" strokeWidth="2.200" /></svg>
  </button>
);
const DockSearch = styled.input`
  flex: none;
  height: 22px;
  margin: 4px 0;
  padding: 0 3px;
  border: 1px solid #e2e2e2;
  background: #fff;
  outline: 0;
  font: 13px ${MONO};
  &::placeholder { color: #a8a8a8; opacity: 1; }
`;
const NavTreeBox = styled.div`
  flex: 0 1 383px;
  min-height: 0;
  display: flex;
  overflow: hidden;
  margin-bottom: 5px;
  border: 1px solid #999;
  border-left-color: #ddd;
  background: #fff;
`;
const NavRows = styled.ul`
  flex: 1;
  min-width: 0;
  height: 386px;
  display: grid;
  grid-template-rows: repeat(19, 1fr);
  margin: 0;
  padding: 0 0 0 2px;
  list-style: none;
  font: 15px ${TREE};
  color: #222;
`;
const NavScroll = styled.div`
  flex: 0 0 20px;
  padding: 21px 9px 170px 8px;
  background: #f0f0f0;
  &::before { content: ''; display: block; height: 100%; border-radius: 2px; background: #8c8c8c; }
`;
const TreeRow = styled.li<{ $gap: number }>`
  display: flex;
  align-items: center;
  min-height: 0;
  white-space: nowrap;
  > svg { margin-right: ${p => p.$gap}px; }
`;
const dotsV = 'repeating-linear-gradient(to bottom, #999 0 1px, transparent 1px 3px)';
const dotsH = 'repeating-linear-gradient(to right, #999 0 1px, transparent 1px 3px)';
const Guide = styled.span<{ $kind: string }>`
  flex: 0 0 24px;
  align-self: stretch;
  display: grid;
  place-items: center;
  background-repeat: no-repeat;
  ${p => p.$kind === 'v' && css`background-image: ${dotsV}; background-size: 1px 100%; background-position: 12px 0;`}
  ${p => 'tmp'.includes(p.$kind) && css`background-image: ${dotsV}, ${dotsH}; background-size: 1px 100%, 12px 1px; background-position: 12px 0, 12px 50%;`}
  ${p => 'lLf'.includes(p.$kind) && css`background-image: ${dotsV}, ${dotsH}; background-size: 1px 50%, 12px 1px; background-position: 12px ${p.$kind === 'f' ? '100%' : '0'}, 12px 50%;`}
`;
const Expander = styled.button`
  display: grid;
  place-items: center;
  width: 11px;
  height: 11px;
  border: 1px solid #98a2b8;
  background: #f7f9fd;
`;
const Lead = styled.span<{ $w: number }>`flex: 0 0 ${p => p.$w}px; display: flex; justify-content: center;`;
const TreeLabel = styled.span<{ $selected?: boolean }>`
  ${p => p.$selected && css`margin-left: -3px; padding: 0 4px 0 3px; line-height: 18px; background: #c9c9c9;`}
`;

type TreeNode = { g: string[]; icon: string; label: string; lead?: number; forbid?: boolean; selected?: boolean };
const TreeItem = ({ n, gap }: { n: TreeNode; gap: number }) => (
  <TreeRow $gap={gap}>
    {n.g.map((k, i) => (
      <Guide key={i} $kind={k}>
        {'mpLf'.includes(k) && (
          <Expander aria-label={k === 'p' ? 'Expand' : 'Collapse'}>
            <svg width="7" height="7" viewBox="0 0 7 7"><path d={k === 'p' ? 'M0 3.500h7M3.500 0v7' : 'M0 3.500h7'} stroke="#3f4f8c" /></svg>
          </Expander>
        )}
      </Guide>
    ))}
    <Lead $w={n.lead ?? 3}>{n.forbid && <Icon name="forbid" size={9} />}</Lead>
    <Icon name={n.icon} size={18} />
    <TreeLabel $selected={n.selected}>{n.label}</TreeLabel>
  </TreeRow>
);

const navNodes: TreeNode[] = [
  { g: ['f'], icon: 'folder', label: 'Components' },
  { g: ['v', 'L'], icon: 'component', label: 'component1' },
  { g: ['v', ' ', 'l'], icon: 'cube', label: 'solid1', lead: 15, selected: true },
  { g: ['m'], icon: 'folder', label: 'Groups' },
  { g: ['v', 't'], icon: 'excluded', label: 'Excluded from Simulation', lead: 15, forbid: true },
  { g: ['v', 't'], icon: 'excluded', label: 'Excluded from Bounding Box', lead: 15, forbid: true },
  { g: ['v', 'l'], icon: 'folderMesh', label: 'Mesh Groups' },
  { g: ['p'], icon: 'folder', label: 'Materials' },
  { g: ['t'], icon: 'folder', label: 'Faces' },
  { g: ['m'], icon: 'folder', label: 'Curves' },
  { g: ['v', 'L'], icon: 'curve', label: 'curve1' },
  { g: ['v', ' ', 'l'], icon: 'spline', label: 'spline1' },
  ...['WCS', 'Anchor Points', 'Wires', 'Voxel Data', 'Parametric Imports', 'Dimensions'].map(label => ({ g: ['t'], icon: 'folder', label })),
  { g: ['t'], icon: 'folderLumped', label: 'Lumped Elements' },
];
const cableNodes: TreeNode[] = [
  { g: ['p'], icon: 'cable', label: 'Cable Types' },
  { g: ['p'], icon: 'goldBar', label: 'Materials' },
  { g: ['p'], icon: 'node', label: 'Nodes' },
  { g: ['p'], icon: 'segment', label: 'Segments' },
  { g: ['p'], icon: 'bundle', label: 'Cable Bundles' },
  { g: ['p'], icon: 'signal', label: 'Signals' },
  { g: ['t'], icon: 'connector', label: 'Connectors' },
  { g: ['l'], icon: 'monitor', label: 'Current Monitors' },
];

const CableFrame = styled.div`
  flex: 1;
  min-height: 0;
  display: flex;
  flex-direction: column;
  border: 1px solid #999;
  border-left-color: #ddd;
  font: 13px ${MONO};
  color: #222;
`;
const ElementSelect = styled(SelectWrap)`
  flex: none;
  height: 33px;
  border-bottom: 1px solid #999;
  background: #fff;
  select { height: 32px; padding: 0 6px; border: 0; background: none; outline: 0; }
  svg { grid-area: 1 / 2; pointer-events: none; }
`;
const FilterRow = styled.div`
  flex: none;
  display: flex;
  align-items: center;
  justify-content: space-between;
  height: 32px;
  padding: 0 6px 0 7px;
  label { display: flex; align-items: center; gap: 4px; }
  input { appearance: none; width: 15px; height: 16px; border: 1px solid #bbb; border-left: 0; background: #fafafa; }
  button { display: flex; align-items: center; gap: 5px; }
`;
const CableTree = styled.div`
  flex: 1;
  min-height: 0;
  border: 1px solid #999;
  border-right-width: 2px;
  background: #fff;
`;
const CableRows = styled.ul`
  display: grid;
  grid-template-rows: repeat(8, 1fr);
  height: 163px;
  margin: 0;
  padding: 0;
  list-style: none;
`;
const ConnectedBox = styled.fieldset`
  flex: none;
  height: 25px;
  margin: 1px 5px 3px;
  padding: 0 4px 0 6px;
  border: 1px solid #aaa;
  border-left-color: #ddd;
  legend { display: flex; width: 100%; align-items: center; padding: 0; line-height: 18px; }
  legend i { flex: 1; height: 1px; margin: 0 0 0 2px; background: #aaa; }
  legend button { display: grid; place-items: center; width: 15px; height: 15px; border-radius: 8px; background: #fff; }
`;

/* ---------- centre ---------- */

const Center = styled.div`
  display: flex;
  flex-direction: column;
  min-width: 0;
  min-height: 0;
`;
const DocTabs = styled.div`padding-top: 2px;`;
const DocTab = styled.div`
  display: inline-flex;
  align-items: center;
  gap: 6px;
  height: 33px;
  padding: 0 14px;
  border: 1px solid #d0d0d0;
  border-bottom: 0;
  border-left: 0;
  background: #fff;
  font: 13px ${MONO};
  vertical-align: top;
`;
const DocClose = styled.button`
  display: grid;
  place-items: center;
  width: 18px;
  height: 18px;
  border: 1px solid #b5503c;
  border-radius: 3px;
  background: #e07058;
`;
const Viewport = styled.section`
  position: relative;
  flex: 1;
  min-height: 0;
  margin: 0 1px 2px;
  border: 1px solid #8e9094;
  outline: 2px solid #c6c8ca;
  background: linear-gradient(#a8adbd, #c6c9d4 35%, #e2e3e8 65%, #fff 97%);
  svg { width: 100%; height: 100%; }
`;
const InfoCard = styled.div`
  position: absolute;
  left: 5px;
  bottom: 3px;
  width: 181px;
  padding: 8px 8px 5px;
  background: rgba(255, 255, 255, 0.72);
  color: #555;
  h3 { margin: 0 0 3px; font: bold 14px/18px ${MONO}; color: #777; }
  dl { margin: 0; padding-left: 3px; display: grid; grid-template-columns: 125px 1fr; line-height: 21px; white-space: nowrap; }
  dd { margin: 0; }
`;
const ViewTabs = styled.div`
  flex: none;
  display: flex;
  height: 22px;
  margin-bottom: 6px;
  background: #fff;
  font: 13px ${MONO};
`;
const ViewTab = styled.button<{ $active?: boolean; $w: number; $bold?: boolean }>`
  width: ${p => p.$w}px;
  padding-top: 2px;
  font-weight: ${p => (p.$bold ? 'bold' : 'normal')};
  background: ${p => (p.$active ? '#fff' : 'transparent')};
  border-right: ${p => (p.$active ? '1px solid #b5b5b5' : '0')};
  border-bottom: 2px solid ${p => (p.$active ? '#0d5c8c' : 'transparent')};
`;
const TabEnd = styled.i`
  width: 1px;
  height: 13px;
  align-self: center;
  background: #aaa;
`;
const Panels = styled.div`
  flex: none;
  display: grid;
  grid-template-columns: repeat(3, minmax(0, 1fr));
  gap: 5px;
  height: 253px;
`;
const Panel = styled.section`
  display: flex;
  flex-direction: column;
  min-height: 0;
`;
const PanelBox = styled.div<{ $white?: boolean }>`
  flex: 1;
  min-height: 0;
  border: 1px solid #999;
  background: ${p => (p.$white ? '#fff' : '#f1f1f3')};
  overflow: hidden;
`;

/* Slightly converging reference plane: position of line n at the top and bottom edge. */
const steps = Array.from({ length: 46 }, (_, i) => i - 22);
const fallX = (n: number) => [792 + 66.7 * n - 0.07 * n * n, 1317 + 64.9 * n - 0.05 * n * n];
const riseX = (n: number) => [1141 + 62.5 * n, 544 + 62 * n];
const gridPath = steps
  .filter(n => n !== 0)
  .map(n => {
    const [a, b] = fallX(n);
    const [c, d] = riseX(n);
    return `M${a} 204L${b} 744M${c} 204L${d} 744`;
  })
  .join('');
const edgePath = steps
  .map(n => {
    const [a, b] = fallX(n);
    const [c, d] = riseX(n);
    return `M${a} 204l${(a - b) / 90} -6M${c} 204l${(c - d) / 90} -6`;
  })
  .join('');
const axisPath = 'M788 200L1317 744M1145 200L544 744';
const platePoints = '966,213 1184,439 1009,598 789,373';
const balls = [[864, 299], [960, 311], [954, 357], [954, 374], [890, 375], [1028, 449], [1092, 447], [1021, 511]];
const rods = ['M890 375L954 374', 'M960 311L955 357', 'M1028 449L1092 447', 'M1028 449L1021 511', 'M954 357v17'];

const Scene = () => (
  <svg viewBox="371 200 1500 542" preserveAspectRatio="xMidYMid slice" role="img" aria-label="3D model view">
    <defs><clipPath id="plate"><polygon points={platePoints} /></clipPath></defs>
    <path d={gridPath + edgePath} stroke="#96989c" strokeWidth="1.500" fill="none" opacity="0.85" />
    <path d={axisPath} stroke="#85878a" strokeWidth="2.200" />
    <path d="M1187 443 1012 601" stroke="#f2f2f2" strokeWidth="1.500" opacity="0.7" />
    <polygon points={platePoints} fill="#6d6c6b" stroke="#222" strokeWidth="1.200" />
    <g clipPath="url(#plate)">
      <path d={gridPath} stroke="#828282" strokeWidth="1.500" fill="none" />
      <path d={axisPath} stroke="#8b8b8b" strokeWidth="2" />
    </g>
    <path d="M864 299C867 345 900 372 950 359" fill="none" stroke="#4e4e4e" strokeWidth="4" />
    <path d="M864 299C867 345 900 372 950 359" fill="none" stroke="#a8a8a8" strokeWidth="2" />
    <path d="M954 374 1028 449" stroke="#4c4c4c" strokeWidth="10" />
    <path d="M954 374 1028 449" stroke="#7c7c7c" strokeWidth="7" />
    {rods.map(d => (
      <g key={d}>
        <path d={d} stroke="#505050" strokeWidth="8" />
        <path d={d} stroke="#8c8c8c" strokeWidth="5.500" />
        <path d={d} stroke="#c2c2c2" strokeWidth="2" />
      </g>
    ))}
    {balls.map(([x, y]) => <circle key={`${x}-${y}`} cx={x} cy={y} r="8" fill="url(#ball)" />)}
    <path d="M974 435 998 459M1000 435 974 459" stroke="#a80a0a" strokeWidth="3.400" strokeLinecap="round" />
    <path d="M974 435 998 459M1000 435 974 459" stroke="#e01818" strokeWidth="1.800" />
    <circle cx="986" cy="447" r="5" fill="#d01212" />
    <g transform="translate(1046 587) scale(1.500)">{orbit}</g>
    <path d="M1783 656 1815 630" stroke="#128a12" strokeWidth="7" />
    <path d="M1783 655 1815 629" stroke="#38dc38" strokeWidth="4" />
    <path d="M1825 621 1817 636 1807 625z" fill="#22b422" stroke="#128a12" />
    <path d="M1784 660 1795 674" stroke="#5a1b4a" strokeWidth="8" />
    <path d="m1786 662 7-3 10 14-9 6-6-3z" fill="#22228c" />
    <path d="m1798 674 12-2 7 20-14-6z" fill="#b47a80" stroke="#8c5056" strokeWidth="0.800" />
    <circle cx="1782" cy="657" r="5.500" fill="#b02028" />
    <g fontFamily="Open Sans, sans-serif" fontWeight="bold" fontSize="18" textAnchor="middle">
      <text x="1833" y="617" fill="#12a012">y</text>
      <text x="1800" y="690" fill="#1010d8">z</text>
      <text x="1823" y="706" fill="#d81414">x</text>
    </g>
  </svg>
);

const PlotSvg = styled.svg`
  width: 100%;
  height: 100%;
  font: 15px "Liberation Sans", Arial, sans-serif;
  fill: #333;
`;
const xTicks = Array.from({ length: 20 }, (_, i) => i);
const CrossPlot = () => (
  <PlotSvg viewBox="0 0 496 231" preserveAspectRatio="xMinYMin slice" role="img" aria-label="Cross section plot">
    <text x="5" y="19">y [mm]</text>
    <path d="M27 26V183.500H500" fill="none" stroke="#333" />
    {[33, 57, 82, 106, 130, 154, 177].map(y => <path key={y} d={`M23 ${y + 0.5}h9`} stroke="#333" />)}
    {xTicks.map(i => <path key={i} d={`M${35 + i * 23.9} 179v8`} stroke="#333" />)}
    {([['3', 40], ['1', 88], ['-1', 136], ['-3', 183]] as [string, number][]).map(([t, y]) => (
      <text key={t} x="19" y={y} textAnchor="end">{t}</text>
    ))}
    {[-10, -8, -6, -4, -2, 0, 2, 4, 6, 8].map((v, i) => (
      <text key={v} x={34 + i * 47.800} y="214" textAnchor="middle">{v}</text>
    ))}
    <text x="225" y="223">x [mm]</text>
  </PlotSvg>
);

const ParamTable = styled.table`
  width: 100%;
  table-layout: fixed;
  border-collapse: collapse;
  text-align: left;
  th { height: 31px; padding: 0 0 0 6px; font-weight: normal; border-right: 1px solid #ddd; }
  th:first-child { width: 30px; }
  td { height: 25px; padding: 0 0 1px 5px; border-bottom: 1px solid #e2e2e2; font-size: 15px; color: #b4b4b4; white-space: nowrap; }
`;
const SortHead = styled.span`
  display: grid;
  grid-template-rows: 5px 26px;
  line-height: 22px;
  svg { margin-left: 48px; }
`;

const MessageTools = styled.div`
  flex: none;
  height: 26px;
  display: flex;
  align-items: flex-start;
`;
const MessageTool = styled.button<{ $on?: boolean; $ml?: number }>`
  display: grid;
  place-items: center;
  width: 27px;
  height: 24px;
  margin-left: ${p => p.$ml ?? 8}px;
  background: ${p => (p.$on ? '#e6e6e6' : 'transparent')};
`;
const MessageBox = styled(PanelBox)`
  display: flex;
  font: 13px/18px ${MONO};
`;
const MessageList = styled.ul`
  flex: 1;
  display: flex;
  flex-direction: column;
  justify-content: flex-end;
  margin: 0;
  padding: 0 7px 2px 6px;
  list-style: none;
`;
const Message = styled.li<{ $first?: boolean }>`
  flex: none;
  display: flex;
  gap: 5px;
  align-items: ${p => (p.$first ? 'flex-start' : 'center')};
  height: ${p => (p.$first ? 42 : 28)}px;
  p { flex: 1; margin: 0; align-self: stretch; border-top: ${p => (p.$first ? '0' : '1px solid #dcdcdc')}; padding-top: ${p => (p.$first ? 0 : 5)}px; white-space: pre; }
`;
const ScrollBar = styled.div`
  flex: 0 0 21px;
  display: grid;
  grid-template-rows: 23px 53px 1fr 22px;
  background: #e4e4e4;
  border-left: 1px solid #aaa;
  button { display: grid; place-items: center; background: #f0f0f0; border: 0 solid #aaa; }
  button:first-child { border-bottom-width: 1px; }
  button:last-child { border-top-width: 1px; }
  i { background: #f0f0f0; border-top: 1px solid #aaa; }
`;
const MessageTabs = styled.div`
  flex: none;
  display: flex;
  height: 27px;
  font: 13px ${MONO};
`;

/* ---------- status and task bar ---------- */

const StatusBar = styled.footer`
  flex: none;
  display: flex;
  align-items: center;
  justify-content: space-between;
  height: 33px;
  padding: 0 2px 0 8px;
  line-height: 24px;
`;
const StatusGroup = styled.div`display: flex; align-items: center; white-space: pre;`;
const StatusButton = styled.button<{ $on?: boolean; $menu?: boolean }>`
  display: flex;
  align-items: ${p => (p.$menu ? 'flex-end' : 'center')};
  justify-content: ${p => (p.$menu ? 'flex-end' : 'center')};
  width: ${p => (p.$menu ? 44 : 28)}px;
  height: 26px;
  padding: ${p => (p.$menu ? '0 4px 3px 0' : 0)};
  background: ${p => (p.$on ? '#cacaca' : 'transparent')};
`;
const StatusRule = styled.i<{ $light?: boolean }>`
  width: 1px;
  height: 20px;
  margin: 0 ${p => (p.$light ? 3 : 10)}px;
  background: ${p => (p.$light ? '#d4d4d4' : '#555')};
  &:last-child { margin-right: 0; }
`;
const Raster = styled.span`margin-left: 12px;`;

const TaskBarClip = styled.div`flex: 0 0 20px; overflow: hidden; background: #212121;`;
const TaskBar = styled.div`
  display: flex;
  align-items: center;
  height: 48px;
  padding-left: 16px;
  font-size: 14px;
  color: #f0f0f0;
`;
const Pinned = styled.button<{ $w: number }>`width: ${p => p.$w}px; display: flex;`;
const Task = styled.button<{ $w: number; $on?: boolean }>`
  display: flex;
  align-items: center;
  gap: 8px;
  width: ${p => p.$w}px;
  height: 48px;
  padding-left: 16px;
  background: ${p => (p.$on ? '#333' : 'transparent')};
  line-height: 20px;
  white-space: nowrap;
`;
const Tray = styled.div`
  flex: 1;
  align-self: stretch;
  display: flex;
  justify-content: flex-end;
  align-items: center;
  gap: 16px;
  padding-right: 24px;
  time { margin: 0 24px 0 16px; align-self: flex-start; padding-top: 4px; font-size: 15px; line-height: 20px; }
`;

const messages = Array.from({ length: 5 }, () => 'No PEC shape is found');

export default function App() {
  return (
    <Shell>
      <GlobalStyle />
      <Gradients />
      <TitleBar>
        <TabList>
          <RibbonTab $file>File</RibbonTab>
          <RibbonTab>Home</RibbonTab>
          <RibbonTab $active>Modeling</RibbonTab>
          <RibbonTab>Cables</RibbonTab>
          <RibbonTab>Simulation</RibbonTab>
          <RibbonTab>Post-Processing</RibbonTab>
          <RibbonTab>View</RibbonTab>
        </TabList>
        <TitleTools>
          <QuickSearch><input placeholder="Search (Alt+Q)" aria-label="Search" /><Icon name="search" /></QuickSearch>
          <CollapseButton aria-label="Collapse ribbon"><Caret $up /></CollapseButton>
          <HelpButton aria-label="Help"><Icon name="help" /><Caret $light /></HelpButton>
        </TitleTools>
      </TitleBar>

      <Ribbon>
        <Group title="Exchange" w={139} center><Big icon="exchange" label="Import/Export" arrow /></Group>
        <Group title="Materials" w={179} inset={12}>
          <Column>
            <Tool icon="background" label="Background" />
            <Tool icon="library" label="Material Library" arrow />
            <Tool icon="brick" label="New/Edit" arrow />
          </Column>
        </Group>
        <Group title="Shapes" w={266} inset={8}>
          <ShapeRows>
            <ShapeRow>
              <Shape name="cube" /><Shape name="sphere" /><Shape name="cone" /><Shape name="torus" /><Shape name="cylinder" />
              <More /><Rule $after={12} /><Shape name="sheet" /><More />
            </ShapeRow>
            <ShapeRow>
              <Shape name="extrude" /><Shape name="revolve" /><Shape name="loft" /><Rule /><Shape name="faceArrow" /><More />
              <Shape name="curveNode" /><More /><Shape name="wave" /><Shape name="hook" />
            </ShapeRow>
          </ShapeRows>
        </Group>
        <Group title="Tools" w={379} inset={8}>
          <Big icon="transform" label="Transform" arrow w={90} />
          <Column $ml={7} $w={114}>
            <Tool icon="align" label="Align" />
            <Tool icon="blend" label="Blend" arrow off />
            <Tool icon="boolean" label="Boolean" arrow />
          </Column>
          <Column>
            <Tool icon="bend" label="Bend Tools" arrow />
            <Tool icon="modify" label="Modify Locally" arrow />
            <Tool icon="shape" label="Shape Tools" arrow />
          </Column>
        </Group>
        <Group title="Curves" w={80} center><Big icon="curves" label="Curves" arrow /></Group>
        <Group title="Picks" w={114}>
          <Big icon="picks" label="Picks" arrow w={68} />
          <Column>
            <Tool icon="pickPoint" name="Pick point" arrow />
            <Tool icon="pickList" name="Pick lists" arrow />
            <Tool icon="pickClear" name="Clear picks" />
          </Column>
        </Group>
        <Group title="Edit" w={278} inset={12}>
          <Big icon="properties" label="Edit" second="Properties" w={90} />
          <Big icon="history" label="History" second="List" w={72} />
          <Rule $h={88} $after={6} />
          <Column $w={46}>
            <Tool icon="calculator" name="Calculator" />
            <Tool icon="refreshBox" name="Update" />
            <Tool icon="labelBox" name="Parameters" arrow />
          </Column>
          <Column>
            <Tool icon="textEdit" name="Rename" arrow />
            <Tool icon="info" name="Information" />
          </Column>
        </Group>
        <Group title="WCS" w={121} inset={2}>
          <Big icon="wcs" label="Local" second="WCS" arrow w={72} />
          <Column>
            <Tool icon="wcsRotate" name="Transform WCS" />
            <Tool icon="wcsPick" name="Align WCS" arrow />
            <Tool icon="wcsAnchor" name="Anchor WCS" arrow />
          </Column>
        </Group>
        <Group title="Sectional View" w={230} inset={4}>
          <Big icon="cutting" label="Cutting" second="Plane" arrow w={72} />
          <SectionForm>
            <label htmlFor="normal">Normal:</label>
            <SelectWrap><FormSelect id="normal"><option>X</option></FormSelect><Caret /></SelectWrap>
            <label htmlFor="position">Position:</label>
            <FormInput id="position" defaultValue="250" />
            <SliderRow>
              <button aria-label="Decrease">−</button>
              <Slider type="range" aria-label="Plane position" defaultValue="50" />
              <button aria-label="Increase">+</button>
            </SliderRow>
          </SectionForm>
        </Group>
      </Ribbon>

      <Workspace>
        <LeftDock>
          <DockTitle>Navigation Tree<CloseX /></DockTitle>
          <DockSearch placeholder="Search" aria-label="Search navigation tree" />
          <NavTreeBox>
            <NavRows>{navNodes.map(n => <TreeItem key={n.label} n={n} gap={7} />)}</NavRows>
            <NavScroll />
          </NavTreeBox>
          <DockTitle>Cable Navigation Tree<CloseX /></DockTitle>
          <DockSearch placeholder="Search" aria-label="Search cable tree" />
          <CableFrame>
            <ElementSelect>
              <select aria-label="Elements"><option>All Elements</option></select>
              <svg width="14" height="9" viewBox="0 0 12 8"><path d="m1 1 5 5 5-5" fill="none" stroke="#666" strokeWidth="1.300" /></svg>
            </ElementSelect>
            <FilterRow>
              <label><input type="checkbox" />Only selected items</label>
              <button><Icon name="unselect" />Unselect All</button>
            </FilterRow>
            <CableTree>
              <CableRows>{cableNodes.map(n => <TreeItem key={n.label} n={n} gap={5} />)}</CableRows>
            </CableTree>
            <ConnectedBox>
              <legend>
                Select connected<i />
                <button aria-label="Expand">
                  <svg width="11" height="11" viewBox="0 0 11 11"><path d="M0 5.500h11M5.500 0v11" stroke="#111" strokeWidth="2.600" /></svg>
                </button>
              </legend>
            </ConnectedBox>
          </CableFrame>
        </LeftDock>

        <Center>
          <DocTabs>
            <DocTab>
              <Icon name="project" />
              test1*
              <DocClose aria-label="Close test1">
                <svg width="10" height="10" viewBox="0 0 10 10"><path d="m1.500 1.500 7 7M8.500 1.500l-7 7" stroke="#fff" strokeWidth="2.400" /></svg>
              </DocClose>
            </DocTab>
          </DocTabs>
          <Viewport>
            <Scene />
            <InfoCard>
              <h3>component1:solid1</h3>
              <dl>
                <dt>Material</dt><dd>PEC</dd>
                <dt>Type</dt><dd>PEC</dd>
                <dt>Thermal cond.</dt><dd>PTC</dd>
              </dl>
            </InfoCard>
          </Viewport>
          <ViewTabs>
            <ViewTab $active $w={127}>3D</ViewTab>
            <ViewTab $w={126}>Schematic</ViewTab>
            <TabEnd />
          </ViewTabs>
          <Panels>
            <Panel>
              <DockTitle $h={20}>Cross Section<CloseX /></DockTitle>
              <PanelBox><CrossPlot /></PanelBox>
            </Panel>
            <Panel>
              <DockTitle $h={20}>Parameter List<CloseX /></DockTitle>
              <PanelBox $white>
                <ParamTable>
                  <thead>
                    <tr>
                      <th aria-label="Filter"><Icon name="filter" size={16} /></th>
                      <th>
                        <SortHead>
                          <svg width="10" height="6" viewBox="0 0 10 6"><path d="m1 5 4-4 4 4" fill="none" stroke="#777" /></svg>
                          Name
                        </SortHead>
                      </th>
                      <th>Expression</th><th>Value</th><th>Description</th>
                    </tr>
                  </thead>
                  <tbody><tr><td /><td>&lt;new parame...</td><td /><td /><td /></tr></tbody>
                </ParamTable>
              </PanelBox>
            </Panel>
            <Panel>
              <DockTitle $h={20}>Messages<CloseX /></DockTitle>
              <MessageTools>
                <MessageTool $ml={0} aria-label="Errors"><Icon name="errorOff" /></MessageTool>
                <MessageTool $on aria-label="Warnings"><Icon name="warning" size={18} /></MessageTool>
                <MessageTool $on aria-label="Information"><Icon name="bubble" /></MessageTool>
                <MessageTool $ml={16} aria-label="Clear"><Icon name="clearList" /></MessageTool>
              </MessageTools>
              <MessageBox $white>
                <MessageList>
                  <Message $first><Icon name="bubble" size={18} /><p>{'Cable library:\n1 Ribbon cable has been loaded to project.'}</p></Message>
                  {messages.map((m, i) => <Message key={i}><Icon name="warning" size={18} /><p>{m}</p></Message>)}
                </MessageList>
                <ScrollBar>
                  <button aria-label="Scroll up"><Caret $up /></button>
                  <span />
                  <i />
                  <button aria-label="Scroll down"><Caret /></button>
                </ScrollBar>
              </MessageBox>
              <MessageTabs>
                <ViewTab $active $w={91}>Messages</ViewTab>
                <ViewTab $w={91} $bold>Progress</ViewTab>
                <TabEnd />
              </MessageTabs>
            </Panel>
          </Panels>
        </Center>
      </Workspace>

      <StatusBar>
        <span>Ready</span>
        <StatusGroup>
          <StatusButton $on aria-label="Zoom box"><Icon name="zoomBox" /></StatusButton>
          <StatusButton aria-label="Pan"><Icon name="pan" /></StatusButton>
          <StatusButton aria-label="Rotate"><Icon name="orbit" /></StatusButton>
          <StatusButton aria-label="Dynamic zoom"><Icon name="zoom" /></StatusButton>
          <StatusButton aria-label="Rotate in plane"><Icon name="rotate" /></StatusButton>
          <StatusRule $light />
          <StatusButton aria-label="Fit view"><Icon name="fit" /></StatusButton>
          <StatusButton aria-label="Cutting plane"><Icon name="cutBox" /></StatusButton>
          <StatusButton $menu aria-label="View mode"><Icon name="wireCube" /><Caret /></StatusButton>
          <StatusRule $light />
          <StatusButton aria-label="Add plot"><Icon name="addPlot" /></StatusButton>
          <Raster>Raster=200.000</Raster>
          <StatusRule />
          <span>Normal</span>
          <StatusRule />
          <span>{'mm  MHz  µs  K'}</span>
          <StatusRule />
        </StatusGroup>
      </StatusBar>

      <TaskBarClip>
        <TaskBar>
          <Pinned $w={67} aria-label="Start">
            <svg width="28" height="26" viewBox="0 0 28 26"><path d="M0 0h13v12H0zM15 0h13v12H15zM0 14h13v12H0zM15 14h13v12H15z" fill="#58b4ee" /></svg>
          </Pinned>
          <Pinned $w={58} aria-label="Settings">
            <svg width="26" height="26" viewBox="0 0 26 26"><path d="M1 3h5l2-3h10l2 3h5v8l-3 2v6l-4 7H8l-4-7v-6l-3-2z" fill="#7c8894" /><circle cx="13" cy="14" r="8" fill="#c4d4e2" /></svg>
          </Pinned>
          <Pinned $w={71} aria-label="Files">
            <svg width="31" height="26" viewBox="0 0 31 26"><path d="M0 0h11l3 4h17v22H0z" fill="#f6c342" /><path d="M0 0h11l3 4H0z" fill="#d99a16" /></svg>
          </Pinned>
          <Pinned $w={54} aria-label="Matlab">
            <svg width="28" height="26" viewBox="0 0 28 26"><path d="M0 18 9 9 15 0l13 26z" fill="#dc6a28" /><path d="m0 18 9-9 6-9-3 22z" fill="#3f6fa8" /></svg>
          </Pinned>
          <Pinned $w={46} aria-label="Notes">
            <svg width="30" height="26" viewBox="0 0 30 26"><path d="M7 0h23v26H7z" fill="#b266e0" /><path d="M0 6h14v16H0z" fill="#7a2ab0" /></svg>
          </Pinned>
          <Task $w={204}>
            <svg width="27" height="27" viewBox="0 0 27 27"><circle cx="13.500" cy="13.500" r="13.500" fill="#dc3f30" /><path d="M13.500 7H27c2 12-7 20-13 20z" fill="#f6c32c" /><circle cx="13.500" cy="13.500" r="5.500" fill="#4a86e0" stroke="#fff" strokeWidth="2" /></svg>
            CST用大数据学习
          </Task>
          <Task $w={204}>
            <svg width="27" height="27" viewBox="0 0 27 27"><circle cx="13.500" cy="13.500" r="13.500" fill="#4f7dcc" /><circle cx="13.500" cy="11" r="5" fill="none" stroke="#fff" strokeWidth="3" /></svg>
            CST Studio Suite
          </Task>
          <Task $w={204}>
            <svg width="30" height="27" viewBox="0 0 30 27"><rect width="30" height="27" rx="4" fill="#ec3f5e" /><path d="M10 6h6c8 0 8 14 0 14h-6z" fill="none" stroke="#fff" strokeWidth="3" /></svg>
            CST Studio Suite
          </Task>
          <Task $w={204}>
            <svg width="24" height="27" viewBox="0 0 24 27"><rect width="24" height="27" rx="2" fill="#f4f4f4" /><path d="M3 5h13M3 10h8" stroke="#b8443a" strokeWidth="4" strokeDasharray="3 2" /><path d="m14 4 7 7h-7z" fill="#aaa" /></svg>
            录制工具栏
          </Task>
          <Task $w={204} $on>
            <svg width="22" height="27" viewBox="0 0 22 27"><rect width="22" height="27" fill="#122080" /><path d="M18 5H5v12h6M18 11h-7v10" fill="none" stroke="#fff" strokeWidth="3" /></svg>
            test1 - CST Studio ...
          </Task>
          <Tray>
            <svg width="140" height="18" viewBox="0 0 140 18" fill="none" stroke="#eee" strokeWidth="2">
              <path d="M2 2v12h16V3H6M40 10c3-5 8-5 11 0M66 4l5 10M80 2v12M96 6v8" /><path d="M122 1h18v16h-18z" fill="#eee" /><path d="m126 4 4 10 4-10" stroke="#222" />
            </svg>
            <time>22:36</time>
            <svg width="18" height="18" viewBox="0 0 18 18"><path d="M1 1h16v13H1z" fill="none" stroke="#eee" strokeWidth="2" /></svg>
          </Tray>
        </TaskBar>
      </TaskBarClip>
    </Shell>
  );
}
